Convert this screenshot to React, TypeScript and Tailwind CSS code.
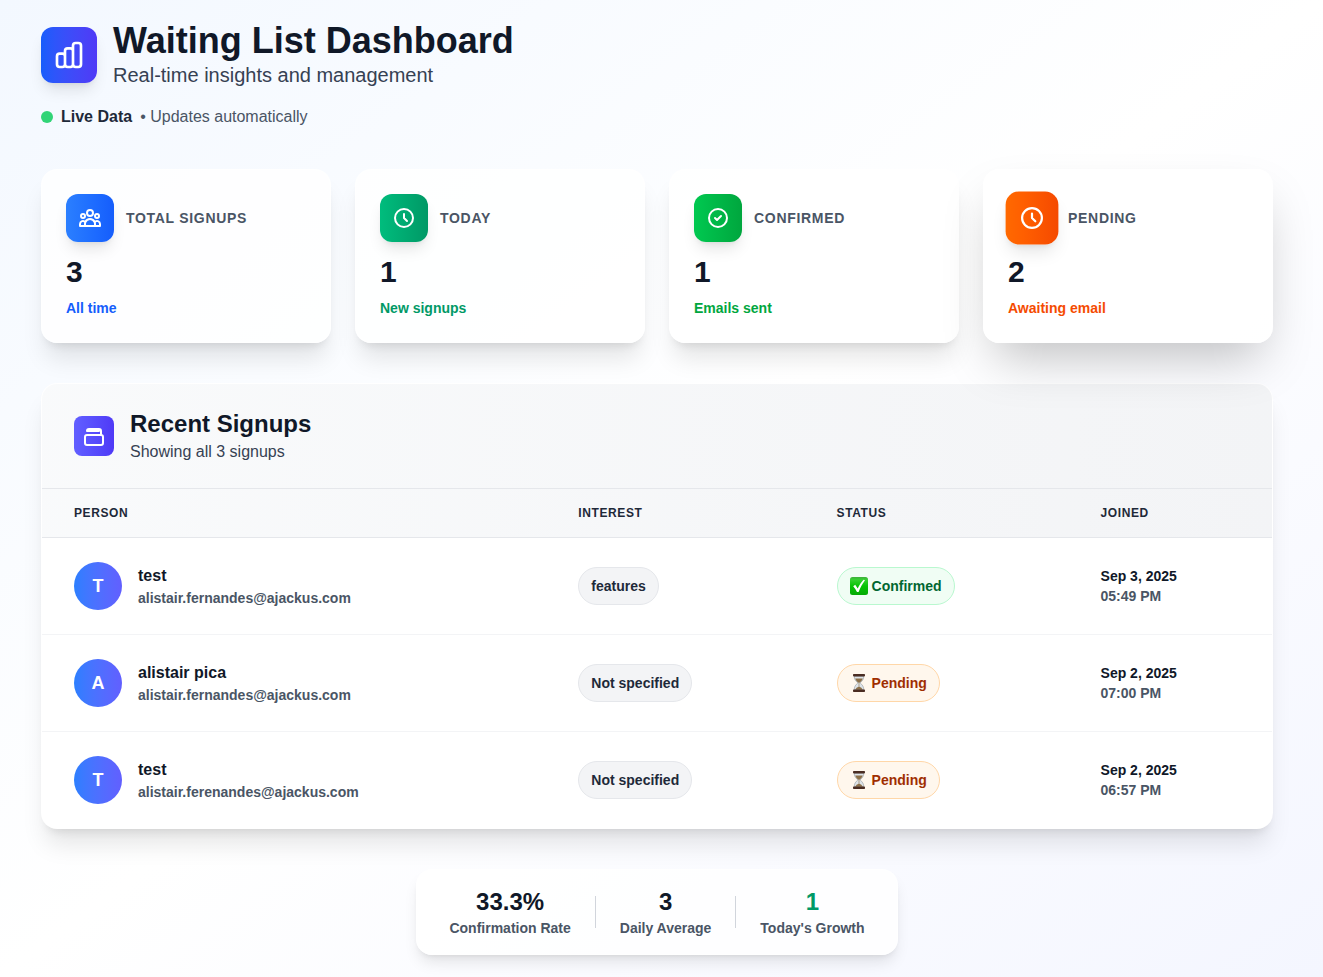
import type { ReactNode } from "react";

const paths = {
  chart:
    "M9 19v-6a2 2 0 00-2-2H5a2 2 0 00-2 2v6a2 2 0 002 2h2a2 2 0 002-2zm0 0V9a2 2 0 012-2h2a2 2 0 012 2v10m-6 0a2 2 0 002 2h2a2 2 0 002-2m0 0V5a2 2 0 012-2h2a2 2 0 012 2v14a2 2 0 01-2 2h-2a2 2 0 01-2-2z",
  users:
    "M17 20h5v-2a3 3 0 00-5.356-1.857M17 20H7m10 0v-2c0-.656-.126-1.283-.356-1.857M7 20H2v-2a3 3 0 015.356-1.857M7 20v-2c0-.656.126-1.283.356-1.857m0 0a5.002 5.002 0 019.288 0M15 7a3 3 0 11-6 0 3 3 0 016 0zm6 3a2 2 0 11-4 0 2 2 0 014 0zM7 10a2 2 0 11-4 0 2 2 0 014 0z",
  clock: "M12 8v4l3 3m6-3a9 9 0 11-18 0 9 9 0 0118 0z",
  check: "M9 12l2 2 4-4m6 2a9 9 0 11-18 0 9 9 0 0118 0z",
  stack:
    "M19 11a2 2 0 012 2v6a2 2 0 01-2 2H5a2 2 0 01-2-2v-6a2 2 0 012-2h14m0 0V7a2 2 0 00-2-2H7a2 2 0 00-2 2m0 0h12",
};

function Icon({ name, className }: { name: keyof typeof paths; className: string }) {
  return (
    <svg className={className} fill="none" stroke="currentColor" viewBox="0 0 24 24" aria-hidden="true">
      <path strokeLinecap="round" strokeLinejoin="round" strokeWidth={2} d={paths[name]} />
    </svg>
  );
}

const stats: {
  label: string;
  value: string;
  note: string;
  icon: keyof typeof paths;
  tile: string;
  text: string;
  active?: boolean;
}[] = [
  { label: "Total Signups", value: "3", note: "All time", icon: "users", tile: "from-blue-500 to-blue-600", text: "text-blue-600" },
  { label: "Today", value: "1", note: "New signups", icon: "clock", tile: "from-emerald-500 to-emerald-600", text: "text-emerald-600" },
  { label: "Confirmed", value: "1", note: "Emails sent", icon: "check", tile: "from-green-500 to-green-600", text: "text-green-600" },
  { label: "Pending", value: "2", note: "Awaiting email", icon: "clock", tile: "from-orange-500 to-orange-600", text: "text-orange-600", active: true },
];

const rows = [
  { name: "test", email: "alistair.fernandes@ajackus.com", interest: "features", confirmed: true, date: "Sep 3, 2025", time: "05:49 PM" },
  { name: "alistair pica", email: "alistair.fernandes@ajackus.com", interest: "Not specified", confirmed: false, date: "Sep 2, 2025", time: "07:00 PM" },
  { name: "test", email: "alistair.ferenandes@ajackus.com", interest: "Not specified", confirmed: false, date: "Sep 2, 2025", time: "06:57 PM" },
];

function Pill({ className, children }: { className: string; children: ReactNode }) {
  return (
    <span className={`inline-flex items-center rounded-full border px-3 py-2 text-sm font-semibold whitespace-nowrap ${className}`}>
      {children}
    </span>
  );
}

function StatusPill({ confirmed }: { confirmed: boolean }) {
  return confirmed ? (
    <Pill className="gap-1 border-green-200 bg-green-50 text-green-800">
      <svg className="h-[18px] w-[18px]" viewBox="0 0 18 18" aria-hidden="true">
        <defs>
          <linearGradient id="tick" x1="0" y1="0" x2="0" y2="1">
            <stop offset="0" stopColor="#3fae3c" />
            <stop offset="0.15" stopColor="#35d030" />
            <stop offset="0.5" stopColor="#06c406" />
            <stop offset="1" stopColor="#05a905" />
          </linearGradient>
        </defs>
        <rect width="18" height="18" rx="2.5" fill="url(#tick)" />
        <path d="M3.2 9.2L5.2 7.8L7.7 11.4C9.3 8.2 11.200 5.200 13.600 2.700L15 3.300C12.400 6.700 10.300 10.500 8.600 14.900H7C6 12.700 4.800 10.900 3.200 9.200z" fill="#fff" />
      </svg>
      Confirmed
    </Pill>
  ) : (
    <Pill className="gap-1 border-orange-200 bg-orange-50 text-orange-800">
      <svg className="h-[18px] w-[18px]" viewBox="0 0 18 18" aria-hidden="true">
        <path d="M4.200 2h9.600c0 3.200-1.300 4.800-3.700 6.900C12.500 11 13.800 12.600 13.800 16H4.200c0-3.400 1.300-5 3.700-7.100C5.500 6.800 4.200 5.200 4.200 2z" fill="#dde3e8" stroke="#8f979d" strokeWidth="0.6" />
        <path d="M5.200 4.400h7.600c-.6 1.900-1.900 3.100-3.500 4.300v4c1.600.5 2.800 1.300 3.500 3.100H5.200c.7-1.800 1.900-2.600 3.500-3.100v-4C7.100 7.500 5.800 6.300 5.200 4.400z" fill="#8d7048" />
        <rect x="3" y="0" width="12" height="2.400" rx="0.800" fill="#4a2c22" />
        <rect x="3" y="15.600" width="12" height="2.400" rx="0.800" fill="#4a2c22" />
      </svg>
      Pending
    </Pill>
  );
}

function Summary({ value, label, color }: { value: string; label: string; color: string }) {
  return (
    <div className="text-center">
      <div className={`text-2xl font-bold ${color}`}>{value}</div>
      <div className="text-sm font-semibold text-gray-600">{label}</div>
    </div>
  );
}

export default function App() {
  return (
    <div className="min-h-screen bg-linear-to-br from-[#f3f8ff] via-white to-[#f4f6ff] pt-[19px] pr-[50px] pb-[22px] pl-[41px] font-['Liberation_Sans',Arial,sans-serif]">
      <header>
        <div className="flex items-center gap-4">
          <div className="mt-1 flex h-14 w-14 items-center justify-center rounded-xl bg-linear-to-r from-blue-600 to-indigo-600 text-white shadow-lg">
            <Icon name="chart" className="h-8 w-8" />
          </div>
          <div>
            <h1 className="text-4xl leading-[44px] font-bold text-gray-900">Waiting List Dashboard</h1>
            <p className="text-xl leading-6 text-gray-700">Real-time insights and management</p>
          </div>
        </div>
        <div className="mt-[18px] flex items-center gap-2">
          <span className="h-3 w-3 rounded-full bg-[#31d477]" />
          <span className="font-semibold text-gray-800">Live Data</span>
          <span className="text-gray-600">• Updates automatically</span>
        </div>
      </header>

      <section className="mt-10 grid grid-cols-4 gap-6" aria-label="Statistics">
        {stats.map((s) => (
          <article
            key={s.label}
            className={`rounded-2xl border border-white/50 bg-white/80 p-6 ${s.active ? "shadow-2xl" : "shadow-xl"}`}
          >
            <div className="flex items-center gap-3">
              <div
                className={`flex h-12 w-12 items-center justify-center rounded-xl bg-linear-to-r text-white shadow-lg ${s.tile} ${s.active ? "scale-110" : ""}`}
              >
                <Icon name={s.icon} className="h-6 w-6" />
              </div>
              <h2 className="text-sm font-semibold tracking-wider text-gray-600 uppercase">{s.label}</h2>
            </div>
            <p className="mt-3 text-3xl font-bold text-gray-900">{s.value}</p>
            <p className={`mt-2 text-sm font-semibold ${s.text}`}>{s.note}</p>
          </article>
        ))}
      </section>

      <section className="mt-10 overflow-hidden rounded-2xl border border-white/50 bg-white shadow-xl">
        <div className="flex items-center gap-4 border-b border-gray-200 bg-linear-to-r from-gray-50 to-gray-100 px-8 py-6">
          <div className="flex h-10 w-10 items-center justify-center rounded-lg bg-linear-to-r from-indigo-500 to-indigo-600 text-white">
            <Icon name="stack" className="h-6 w-6" />
          </div>
          <div>
            <h2 className="text-2xl font-bold text-gray-900">Recent Signups</h2>
            <p className="text-gray-700">Showing all 3 signups</p>
          </div>
        </div>
        <table className="w-full text-left">
          <thead>
            <tr className="border-b border-gray-200 bg-linear-to-r from-gray-50 to-gray-100 text-xs tracking-wider text-gray-800 uppercase">
              <th className="w-[41%] px-8 py-4 font-bold">Person</th>
              <th className="w-[21%] px-8 py-4 font-bold">Interest</th>
              <th className="px-8 py-4 font-bold">Status</th>
              <th className="px-8 py-4 font-bold">Joined</th>
            </tr>
          </thead>
          <tbody className="divide-y divide-gray-100">
            {rows.map((r) => (
              <tr key={r.date + r.time}>
                <td className="px-8 py-6">
                  <div className="flex items-center gap-4">
                    <div className="flex h-12 w-12 items-center justify-center rounded-full bg-linear-to-r from-blue-500 to-indigo-500 text-lg font-bold text-white">
                      {r.name[0].toUpperCase()}
                    </div>
                    <div>
                      <div className="font-semibold text-gray-900">{r.name}</div>
                      <div className="text-sm font-semibold text-gray-600">{r.email}</div>
                    </div>
                  </div>
                </td>
                <td className="px-8 py-6">
                  <Pill className="border-gray-200 bg-gray-100 text-gray-800">{r.interest}</Pill>
                </td>
                <td className="px-8 py-6">
                  <StatusPill confirmed={r.confirmed} />
                </td>
                <td className="px-8 py-6 text-sm font-semibold">
                  <div className="text-gray-900">{r.date}</div>
                  <div className="text-gray-600">{r.time}</div>
                </td>
              </tr>
            ))}
          </tbody>
        </table>
      </section>

      <footer className="mt-10 flex justify-center">
        <div className="flex items-center gap-6 rounded-2xl border border-white/50 bg-white/80 px-8 py-4 shadow-lg">
          <Summary value="33.3%" label="Confirmation Rate" color="text-gray-900" />
          <div className="h-8 w-px bg-gray-300" />
          <Summary value="3" label="Daily Average" color="text-gray-900" />
          <div className="h-8 w-px bg-gray-300" />
          <Summary value="1" label="Today's Growth" color="text-emerald-600" />
        </div>
      </footer>
    </div>
  );
}
